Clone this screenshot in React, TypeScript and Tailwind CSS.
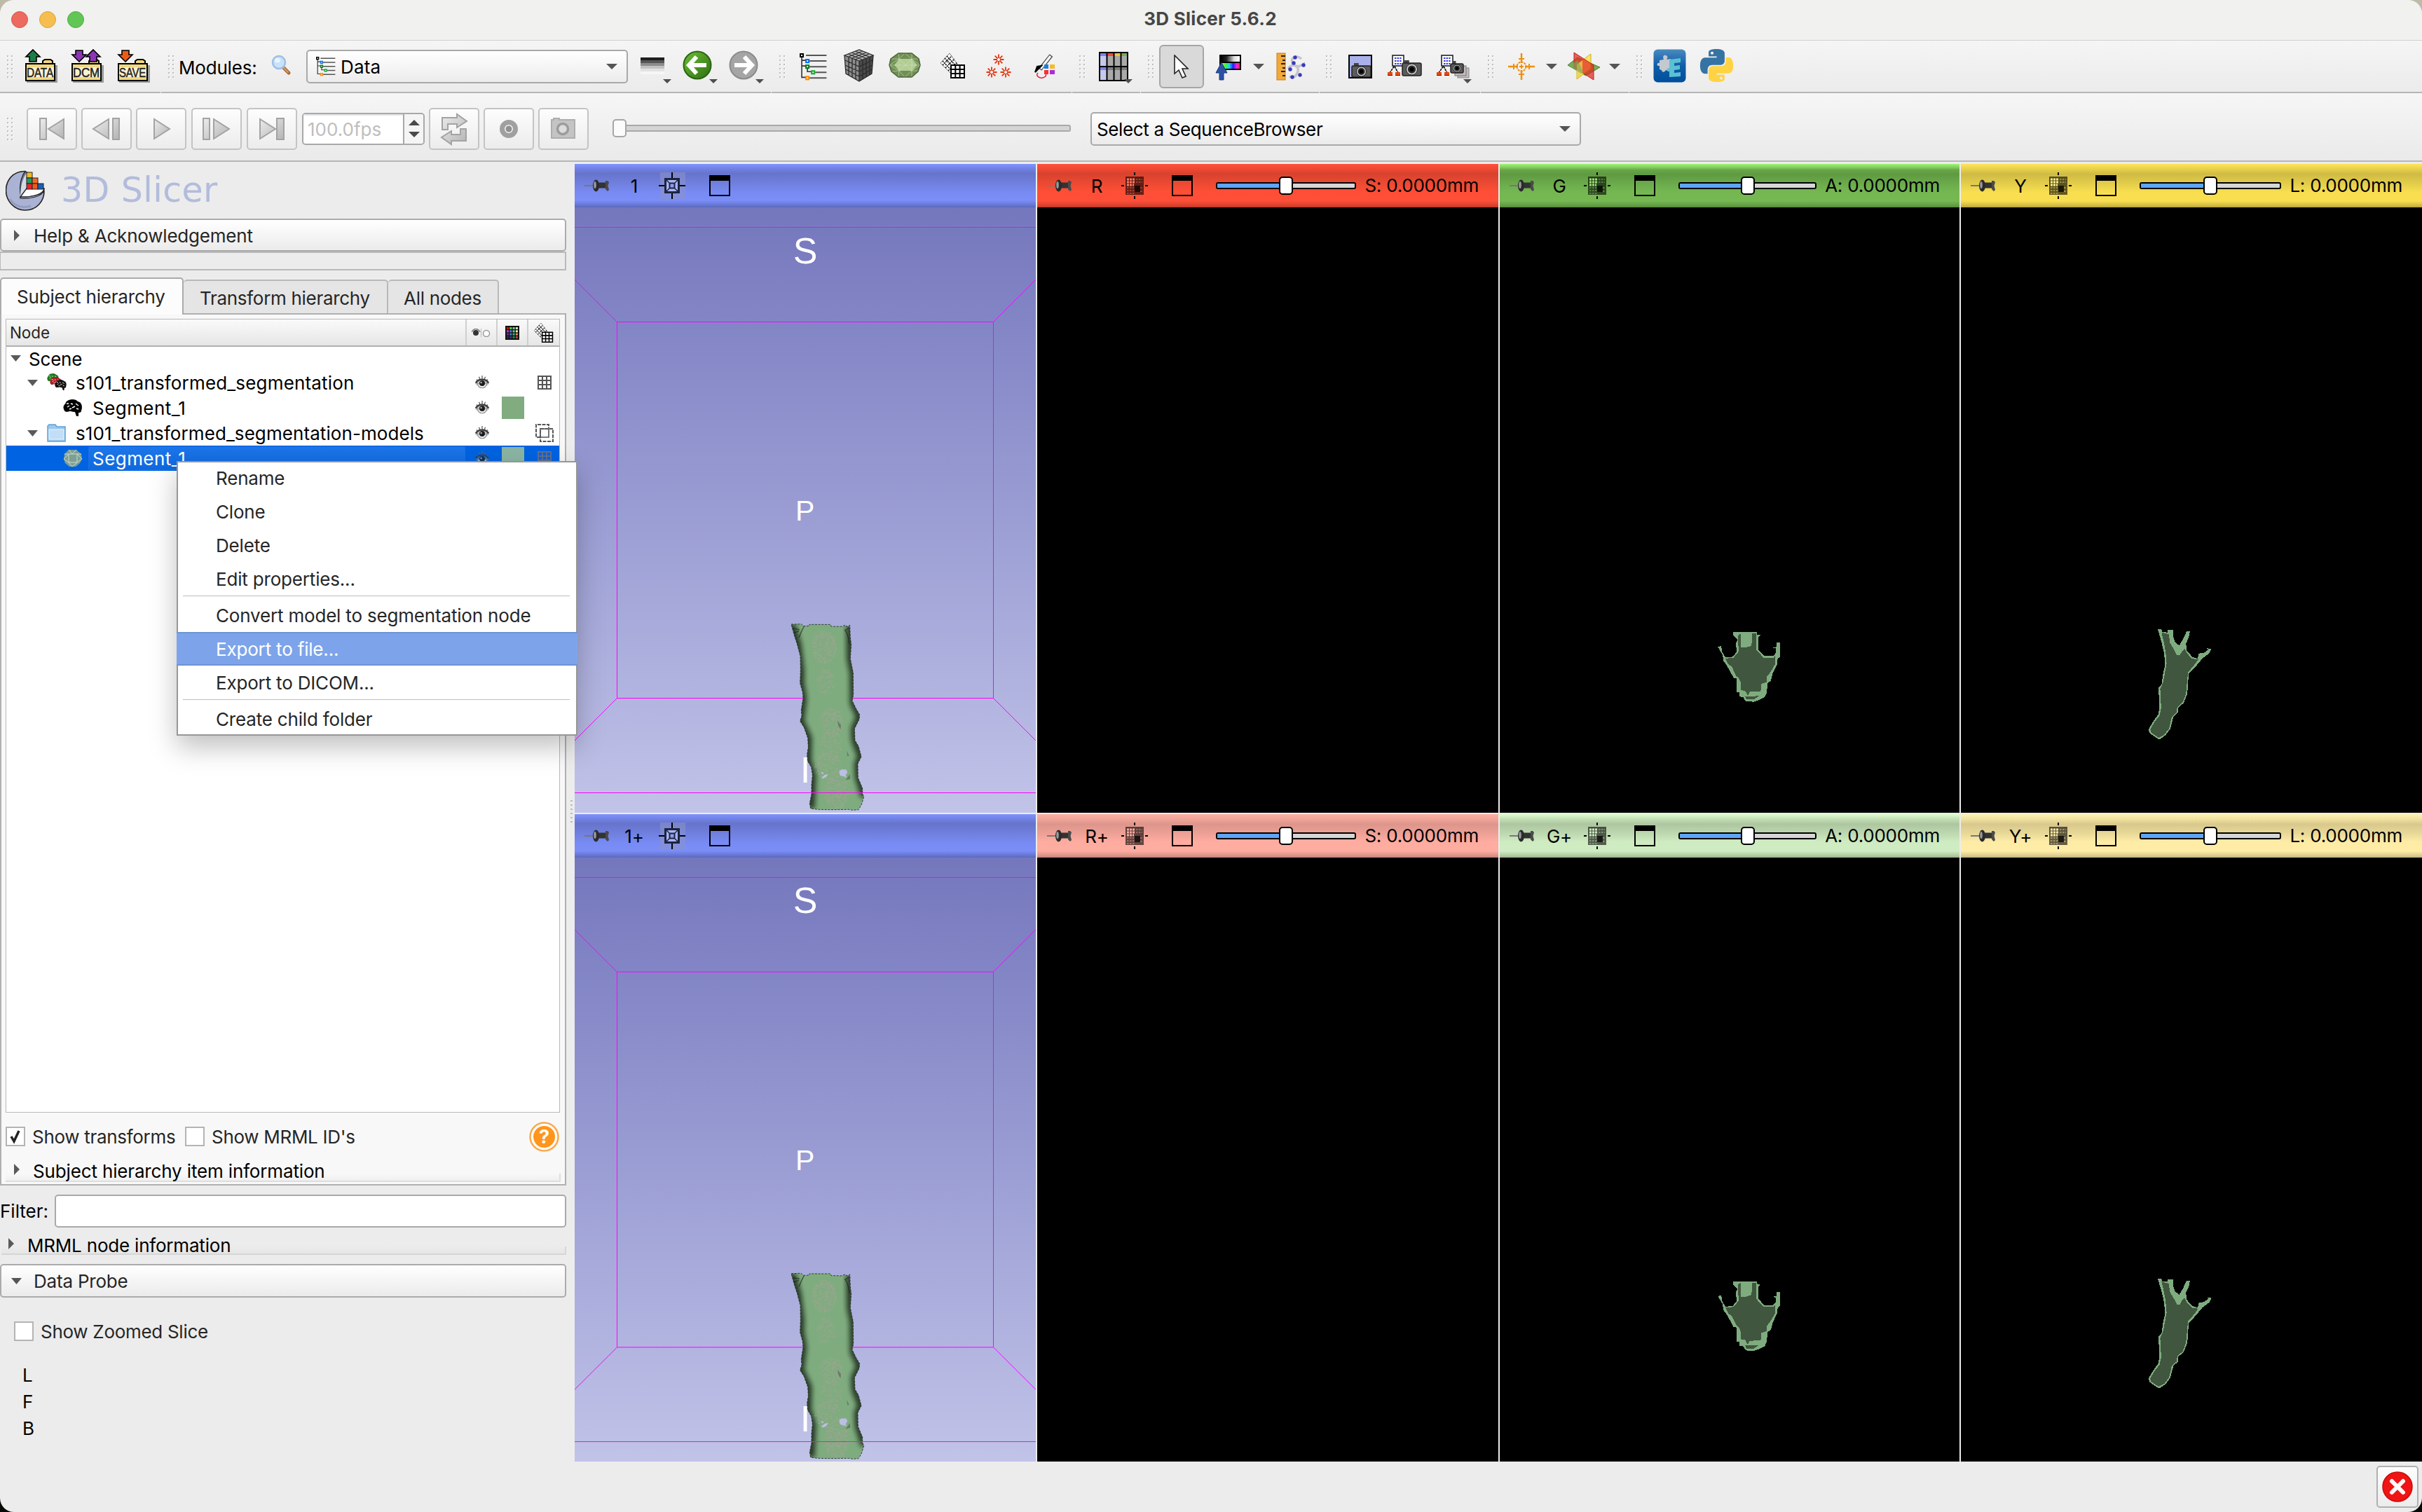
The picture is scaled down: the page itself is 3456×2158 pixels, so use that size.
import React from 'react';

/* ---------- small helpers ---------- */

type IcoProps = { x: number; w: number; y?: number; h?: number; className?: string; children: React.ReactNode };

function Ico({ x, w, y = 58, h = 73, className = '', children }: IcoProps) {
  return (
    <svg className={`shrink-0 overflow-visible ${className}`} width={w} height={h} viewBox={`${x} ${y} ${w} ${h}`}>
      {children}
    </svg>
  );
}

function Handle({ className = '' }: { className?: string }) {
  return (
    <svg className={`shrink-0 self-center ${className}`} width="9" height="34" viewBox="0 0 9 34">
      {[0, 6, 12, 18, 24, 30].map((y) => (
        <g key={y}>
          <rect x="0" y={y + 1} width="2" height="2" fill="#bdbdbd" />
          <rect x="6" y={y + 1} width="2" height="2" fill="#bdbdbd" />
          <rect x="2" y={y + 2} width="1" height="2" fill="#fff" />
          <rect x="8" y={y + 2} width="1" height="2" fill="#fff" />
        </g>
      ))}
    </svg>
  );
}

function SmallArrow({ x, y = 113 }: { x: number; y?: number }) {
  return <path d={`M${x - 6} ${y}h12l-6 6z`} fill="#4e4e4e" />;
}

function DropArrow({ className = '' }: { className?: string }) {
  return (
    <svg className={`shrink-0 self-center ${className}`} width="16" height="8" viewBox="0 0 16 8">
      <path d="M0 0h16l-8 8z" fill="#555" />
    </svg>
  );
}

function RightArrow({ className = '' }: { className?: string }) {
  return (
    <svg className={`shrink-0 ${className}`} width="8" height="16" viewBox="0 0 8 16">
      <path d="M0 0v16l8-8z" fill="#5a5a5a" />
    </svg>
  );
}

/* ---------- toolbar icons ---------- */

const upArrow = (c: number) => `M${c} 71l10 10h-5v7h-10v-7h-5z`;
const downArrow = (c: number) => `M${c} 88l-10-10h5v-6h10v6h5z`;

function Folder({ x, label, arrows }: { x: number; label: string; arrows: React.ReactNode }) {
  return (
    <>
      <path d={`M${x + 2} 93h44v25h-44z`} fill="#9a9a9a" />
      <path d={`M${x + 25} 91v-4l3-2h8l3 2v4`} fill="#efd77e" stroke="#000" strokeWidth="2" />
      <rect x={x + 1} y="91" width="41" height="24" fill="#fcf2d2" stroke="#000" strokeWidth="2" />
      <rect x={x + 2} y="92" width="39" height="4" fill="#f0d980" />
      <rect x={x + 2} y="110" width="39" height="4" fill="#f0d980" />
      <text x={x + 2} y="110" fontSize="18" fontFamily="Liberation Sans, sans-serif" stroke="#222" strokeWidth="0.5" fill="#222" textLength="38" lengthAdjust="spacingAndGlyphs">
        {label}
      </text>
      {arrows}
    </>
  );
}

function TreeGlyph({ x, y, s }: { x: number; y: number; s: number }) {
  return (
    <g transform={`translate(${x} ${y}) scale(${s})`} fill="none">
      <path d="M3 5v29h6M3 10h6M3 18h6M11 20v6h6" stroke="#333" strokeWidth="1.6" />
      <path d="M9 3h29M14 11h24M14 19h24M22 27h16M14 35h24" stroke="#555" strokeWidth="2" />
      <rect x="1" y="1" width="4" height="4" stroke="#000" strokeWidth="2" />
      <rect x="9" y="9" width="4" height="4" stroke="#0a6cf0" strokeWidth="2" />
      <rect x="9" y="17" width="4" height="4" stroke="#0a7a1e" strokeWidth="2" />
      <rect x="17" y="25" width="4" height="4" stroke="#0fae2c" strokeWidth="2" />
      <rect x="9" y="33" width="4" height="4" stroke="#ff8a00" strokeWidth="2" />
    </g>
  );
}

function TransformGlyph({ x, y, s }: { x: number; y: number; s: number }) {
  return (
    <g transform={`translate(${x} ${y}) scale(${s})`}>
      <path d="M13 0L25 17L14 28L0 14z" fill="#fff" stroke="#777" strokeWidth="1" />
      <path d="M3 11l13 14M6 7l13 14M9 4l13 14M3 17L16 4M7 21L20 8M11 25L24 13" stroke="#111" strokeWidth="1.6" strokeDasharray="2 1" fill="none" />
      <path d="M15 17h19v18h-19z" fill="#fff" stroke="#000" strokeWidth="2" />
      <path d="M21.3 17v18M27.6 17v18M15 23h19M15 29h19" stroke="#000" strokeWidth="2" />
    </g>
  );
}

function Camera({ x, y, w, h }: { x: number; y: number; w: number; h: number }) {
  return (
    <g>
      <rect x={x + 3} y={y - 4} width={w / 4} height="5" fill="#444" />
      <rect x={x} y={y} width={w} height={h} rx="2" fill="#5c5c5c" stroke="#222" strokeWidth="1.5" />
      <circle cx={x + w / 2} cy={y + h / 2} r={h / 2 - 1} fill="#c9c9c9" stroke="#222" />
      <circle cx={x + w / 2} cy={y + h / 2} r={h / 3.2} fill="#2a2a2a" />
      <circle cx={x + w / 2} cy={y + h / 2} r={h / 6} fill="#000" />
    </g>
  );
}

function SceneFigure({ x }: { x: number }) {
  return (
    <g>
      <rect x={x + 7} y="79" width="16" height="15" fill="#fff" stroke="#222" strokeWidth="1.6" />
      <path d={`M${x + 10} 83h10M${x + 10} 87h10M${x + 10} 91h10`} stroke="#3a3ae0" strokeWidth="1.8" strokeDasharray="2.4 1.2" />
      <path d={`M${x + 9} 95l-6 9M${x + 10} 95l5 9`} stroke="#000" strokeWidth="1.6" strokeDasharray="3 1" />
      <path d={`M${x} 105h7M${x + 11} 105h7`} stroke="#e84a10" strokeWidth="4" />
      <path d={`M${x} 107.5h7M${x + 11} 107.5h7`} stroke="#222" strokeWidth="1" />
    </g>
  );
}

function star(cx: number, cy: number) {
  let d = '';
  for (let i = 0; i < 4; i++) {
    const a = (i * Math.PI) / 4 + Math.PI / 2;
    const c = Math.cos(a), s = Math.sin(a);
    d += `M${cx + c * 2} ${cy + s * 2}L${cx + c * 7.5} ${cy + s * 7.5}M${cx - c * 2} ${cy - s * 2}L${cx - c * 7.5} ${cy - s * 7.5}`;
  }
  return d;
}

function Group({ w, last, children }: { w?: string; last?: boolean; children: React.ReactNode }) {
  return (
    <div className={`flex h-[75px] items-start border-b-2 border-[#b6b6b6] ${last ? 'flex-1' : 'mr-px'} ${w ?? ''}`}>
      <div className="flex h-[73px] items-center">{children}</div>
    </div>
  );
}

function MainToolbar() {
  return (
    <div className="flex h-[75px] shrink-0 bg-gradient-to-b from-[#f5f5f5] to-[#ebebeb]">
      <Group w="w-[229px]">
        <Handle className="ml-[10px]" />
        <Ico x={36} w={46} className="ml-[17px]">
          <Folder x={36} label="DATA" arrows={<path d={upArrow(47)} fill="#1d7c46" stroke="#000" strokeWidth="1.6" />} />
        </Ico>
        <Ico x={102} w={46} className="ml-[20px]">
          <Folder x={102} label="DCM" arrows={<><path d={downArrow(113)} fill="#8b37b4" stroke="#000" strokeWidth="1.6" /><path d={upArrow(133)} fill="#8b37b4" stroke="#000" strokeWidth="1.6" /></>} />
        </Ico>
        <Ico x={168} w={46} className="ml-[20px]">
          <Folder x={168} label="SAVE" arrows={<path d={downArrow(179)} fill="#ea5c17" stroke="#000" strokeWidth="1.6" />} />
        </Ico>
      </Group>

      <Group w="w-[870px]">
        <Handle className="ml-[10px]" />
        <span className="ml-[6px] mt-[3px] w-[132px] text-[26px]">Modules:</span>
        <Ico x={387} w={28}>
          <path d="M403 95l9 9" stroke="#a8683a" strokeWidth="5" strokeLinecap="round" />
          <path d="M404 96l7 7" stroke="#d7a06c" strokeWidth="2" strokeLinecap="round" />
          <circle cx="398" cy="89" r="9" fill="#c9e2fa" stroke="#9dbfe8" strokeWidth="2.5" />
          <ellipse cx="396" cy="86" rx="4" ry="3.5" fill="#e8f4ff" />
        </Ico>
        <div className="ml-[22px] flex h-[48px] w-[459px] items-center rounded-[5px] border-2 border-[#a9a9a9] bg-gradient-to-b from-white to-[#ececec]">
          <svg className="ml-[12px]" width="28" height="28" viewBox="0 0 28 28"><TreeGlyph x={0} y={0} s={0.72} /></svg>
          <span className="ml-[7px] mt-[2px] text-[26px] tracking-[0.2px]">Data</span>
          <DropArrow className="ml-auto mr-[13px]" />
        </div>
        <Ico x={914} w={46} className="ml-[18px]">
          <rect x="914" y="82" width="34" height="4" fill="#1e1e1e" />
          <rect x="914" y="86" width="34" height="4" fill="#555" />
          <rect x="914" y="90" width="34" height="4" fill="#8c8c8c" />
          <rect x="914" y="94" width="34" height="4" fill="#c2c2c2" />
          <rect x="914" y="98" width="34" height="4" fill="#e2e2e2" />
          <rect x="914" y="102" width="34" height="4" fill="#f6f6f6" />
          <SmallArrow x={952} />
        </Ico>
        <Ico x={975} w={50} className="ml-[15px]">
          <defs><linearGradient id="grn" x1="0" x2="1" y1="0" y2="1"><stop offset="0" stopColor="#6cbf35" /><stop offset="1" stopColor="#2f6f12" /></linearGradient></defs>
          <circle cx="995" cy="93" r="19.5" fill="url(#grn)" stroke="#2a6410" strokeWidth="2" />
          <path d="M1008 93h-22M994 81l-11 12l11 12" stroke="#fff" strokeWidth="6" fill="none" />
          <SmallArrow x={1018} />
        </Ico>
        <Ico x={1041} w={50} className="ml-[16px]">
          <circle cx="1061" cy="93" r="19.5" fill="#a5a5a5" stroke="#8a8a8a" strokeWidth="2" />
          <path d="M1048 93h22M1062 81l11 12l-11 12" stroke="#fff" strokeWidth="6" fill="none" />
          <SmallArrow x={1084} />
        </Ico>
      </Group>

      <Group w="w-[428px]">
        <Handle className="ml-[11px]" />
        <Ico x={1142} w={38} className="ml-[21px]"><TreeGlyph x={1141} y={76} s={1.01} /></Ico>
        <Ico x={1205} w={41} className="ml-[25px]">
          <path d="M1226 71l20 8-20 8-21-8z" fill="#b5b5b5" />
          <path d="M1205 79l21 8v29l-19-11z" fill="#8e8e8e" />
          <path d="M1246 79l-20 8v29l18-11z" fill="#4a4a4a" />
          <path d="M1205 79l21-8 20 8-20 8zM1210 77l20 8M1215 75l20 8M1220 73l20 8M1240 77l-20 8M1236 75l-20 8M1231 73l-20 8M1205 79l2 26 19 11 18-11 2-26M1226 87v29M1211 82v25M1216 84v27M1221 86v27M1231 86v27M1236 84v27M1241 82v25M1206 86l20 9 19-9M1206 93l20 9 19-9M1207 99l19 10 18-10" fill="none" stroke="#2b2b2b" strokeWidth="1.3" />
        </Ico>
        <Ico x={1269} w={44} className="ml-[23px]">
          <path d="M1282 76h19l10 8 2 9-3 9-9 8h-19l-10-8-3-9 2-9z" fill="#6f8f54" />
          <path d="M1283 84h18l8 9-8 8h-18l-7-8z" fill="#b2cc94" />
          <path d="M1272 84l11 0 8-8 10 8h10M1269 93l14-9M1283 84l9 9 9-9 12 9M1269 93l14 8 9-8 9 8 12-8M1272 102l11-1 8 9 10-9h9M1283 84v17M1301 84v17M1269 93h44M1282 76l1 8M1301 76v8M1282 110l1-9M1301 110v-9" fill="none" stroke="#d4e2be" strokeWidth="0.8" opacity="0.7" />
          <path d="M1282 76h19l10 8 2 9-3 9-9 8h-19l-10-8-3-9 2-9z" fill="none" stroke="#4c6638" strokeWidth="1.5" />
        </Ico>
        <Ico x={1342} w={35} className="ml-[29px]"><TransformGlyph x={1342} y={76} s={1} /></Ico>
        <Ico x={1407} w={36} className="ml-[30px]">
          <path d={star(1425, 85) + star(1415, 103) + star(1435, 103)} stroke="#e8330f" strokeWidth="1.8" fill="none" />
        </Ico>
        <Ico x={1476} w={31} className="ml-[33px]">
          <path d="M1500 79l-16 20" stroke="#555" strokeWidth="6" />
          <path d="M1499 80l-14 18" stroke="#fff" strokeWidth="3" />
          <path d="M1486 94l-9 9 3 -8z" fill="#000" stroke="#000" strokeWidth="2" />
          <path d="M1481 104c-4 4 2 8 7 7s6-5 3-9" fill="none" stroke="#e0204a" strokeWidth="1.5" />
          <rect x="1490" y="92" width="6" height="6" fill="#1c7fd8" />
          <rect x="1498" y="92" width="7" height="6" fill="#f6bb28" />
          <rect x="1490" y="100" width="6" height="6" fill="#fa3030" />
          <rect x="1498" y="100" width="7" height="6" fill="#b02ad8" />
        </Ico>
      </Group>

      <Group w="w-[97px]">
        <Handle className="ml-[10px]" />
        <Ico x={1568} w={48} className="ml-[19px]">
          <rect x="1569" y="75" width="40" height="40" fill="#a9a9a9" stroke="#000" strokeWidth="2" />
          <rect x="1570" y="76" width="9" height="38" fill="#c6c8ec" />
          <rect x="1570" y="76" width="9" height="4" fill="#7385ee" />
          <rect x="1580" y="76" width="9" height="4" fill="#f04a36" />
          <rect x="1590" y="76" width="9" height="4" fill="#e8c544" />
          <rect x="1600" y="76" width="8" height="4" fill="#70b050" />
          <rect x="1570" y="96" width="9" height="4" fill="#7385ee" />
          <rect x="1580" y="96" width="28" height="4" fill="#7e7e7e" />
          <path d="M1579.5 75v40M1589.5 75v40M1599.5 75v40M1569 95h40" stroke="#000" strokeWidth="2" />
          <SmallArrow x={1610} />
        </Ico>
      </Group>

      <Group w="w-[254px]">
        <Handle className="ml-[10px]" />
        <div className="ml-[7px] flex h-[62px] w-[64px] items-center justify-center rounded-[6px] border-2 border-[#a6a6a6] bg-[#d9d9d9]">
          <svg width="22" height="34" viewBox="0 0 22 34">
            <path d="M1 1v26l6-5 5 11 5-2-5-11h8z" fill="#fff" stroke="#222" strokeWidth="1.6" />
          </svg>
        </div>
        <Ico x={1735} w={36} className="ml-[17px]">
          <defs>
            <linearGradient id="wl"><stop offset="0" stopColor="#000" /><stop offset="0.3" stopColor="#222" /><stop offset="0.7" stopColor="#ddd" /><stop offset="1" stopColor="#fff" /></linearGradient>
            <linearGradient id="hue"><stop offset="0" stopColor="#ff3" /><stop offset="0.25" stopColor="#3f3" /><stop offset="0.45" stopColor="#2cf" /><stop offset="0.65" stopColor="#22f" /><stop offset="0.85" stopColor="#f2d" /><stop offset="1" stopColor="#f24" /></linearGradient>
          </defs>
          <rect x="1741" y="79" width="29" height="20" fill="#000" stroke="#000" strokeWidth="2" />
          <rect x="1742" y="80" width="27" height="8" fill="url(#wl)" />
          <rect x="1742" y="90" width="27" height="8" fill="url(#hue)" />
          <path d="M1743 89l8 15h-5v10h-6v-10h-5z" fill="#2d52a4" stroke="#1c3a80" strokeWidth="1" />
        </Ico>
        <DropArrow className="ml-[17px]" />
        <Ico x={1821} w={44} className="ml-[17px]">
          <rect x="1822" y="76" width="12" height="38" fill="#f2a93a" stroke="#c47e18" strokeWidth="1" />
          <path d="M1834 80h-6M1834 86h-4M1834 91h-6M1834 97h-4M1834 102h-6M1834 108h-4" stroke="#222" strokeWidth="2" />
          <path d="M1857 84c-9-8-18 1-11 8s14-2 16-2M1838 98c8-10 16-2 14 4s-6 11-12 7" fill="none" stroke="#c4c4cc" strokeWidth="3.5" />
          {[[1848, 82], [1846, 90], [1860, 93], [1841, 99], [1855, 107], [1844, 110]].map(([a, b]) => (
            <circle key={a} cx={a} cy={b} r="2.7" fill="#3838bc" />
          ))}
        </Ico>
      </Group>

      <Group w="w-[229px]">
        <Handle className="ml-[9px]" />
        <Ico x={1924} w={34} className="ml-[23px]">
          <rect x="1925" y="79" width="32" height="32" fill="#aab1ea" stroke="#000" strokeWidth="2" />
          <Camera x={1929} y={94} w={27} h={16} />
        </Ico>
        <Ico x={1980} w={49} className="ml-[22px]">
          <SceneFigure x={1980} />
          <Camera x={2001} y={90} w={27} h={18} />
        </Ico>
        <Ico x={2050} w={52} className="ml-[21px]">
          <SceneFigure x={2050} />
          <rect x="2080" y="97" width="16" height="14" fill="#c4bcbc" stroke="#888" />
          <rect x="2076" y="94" width="16" height="14" fill="#c4bcbc" stroke="#777" />
          <Camera x={2070} y={91} w={18} h={13} />
          <SmallArrow x={2094} />
        </Ico>
      </Group>

      <Group w="w-[211px]">
        <Handle className="ml-[10px]" />
        <Ico x={2152} w={38} className="ml-[20px]">
          <path d="M2171 76v14M2171 100v14M2152 95h14M2176 95h14" stroke="#f09010" strokeWidth="2.5" />
          <circle cx="2171" cy="95" r="6.5" fill="none" stroke="#f09010" strokeWidth="2" strokeDasharray="3 1.2" />
          <path d="M2167 84h8M2167 106h8M2160 91v8M2182 91v8M2168 95h6M2171 92v6" stroke="#f09010" strokeWidth="2" />
        </Ico>
        <DropArrow className="ml-[16px]" />
        <Ico x={2237} w={46} className="ml-[15px]">
          <path d="M2237 93l14-11 32 14-20 12z" fill="#78ae58" stroke="#4c8030" strokeWidth="1" />
          <path d="M2270 77l-20 15v21l20-15z" fill="#f8e468" stroke="#cfae20" strokeWidth="1" />
          <path d="M2246 75v21l28 18v-21z" fill="#e02a20" stroke="#c02020" strokeWidth="1" fillOpacity="0.72" />
          <path d="M2250 92l8-6v20l-8 6z" fill="#f3cf4c" fillOpacity="0.75" />
          <path d="M2239 94l12-8 9 18-4 1z" fill="#78ae58" fillOpacity="0.6" />
        </Ico>
        <DropArrow className="ml-[13px]" />
      </Group>

      <Group last>
        <Handle className="ml-[10px]" />
        <Ico x={2358} w={47} className="ml-[15px]">
          <defs><linearGradient id="ext" x1="0" x2="0" y1="0" y2="1"><stop offset="0" stopColor="#4a8ac0" /><stop offset="0.5" stopColor="#0f5ca8" /><stop offset="1" stopColor="#004e9c" /></linearGradient></defs>
          <rect x="2358.5" y="70.5" width="46" height="47" rx="6" fill="url(#ext)" />
          <path d="M2367 86l6-1c-2-4 0-7 3-6s3 4 1 6l6-1v18l-7-2c-2 4-6 3-6 0l-3-1v-5c-5 1-4-6 0-4z" fill="#c3c9cf" />
          <path d="M2381 85l16-2v6l-9 1v4l8-1v6l-8 1v4l9-1v6l-16 1v-8c-4 1-5-5 0-5z" fill="#5cc0d4" />
        </Ico>
        <Ico x={2425} w={47} className="ml-[20px]">
          <g transform="translate(2425 70) scale(1.96)">
            <path fill="#3673a5" d="M14.25.18l.9.2.73.26.59.3.45.32.34.34.25.34.16.33.1.3.04.26.02.2-.01.13V8.5l-.05.63-.13.55-.21.46-.26.38-.3.31-.33.25-.35.19-.35.14-.33.1-.3.07-.26.04-.21.02H8.77l-.69.05-.59.14-.5.22-.41.27-.33.32-.27.35-.2.36-.15.37-.1.35-.07.32-.04.27-.02.21v3.06H3.17l-.21-.03-.28-.07-.32-.12-.35-.18-.36-.26-.36-.36-.35-.46-.32-.59-.28-.73-.21-.88-.14-1.05-.05-1.23.06-1.22.16-1.04.24-.87.32-.71.36-.57.4-.44.42-.33.42-.24.4-.16.36-.1.32-.05.24-.01h.16l.06.01h8.16v-.83H6.18l-.01-2.75-.02-.37.05-.34.11-.31.17-.28.25-.26.31-.23.38-.2.44-.18.51-.15.58-.12.64-.1.71-.06.77-.04.84-.02 1.27.05zm-6.3 1.98l-.23.33-.08.41.08.41.23.34.33.22.41.09.41-.09.33-.22.23-.34.08-.41-.08-.41-.23-.33-.33-.22-.41-.09-.41.09z" />
            <path fill="#ffd343" d="M21.04 6.11l.28.06.32.12.35.18.36.27.36.35.35.47.32.59.28.73.21.88.14 1.04.05 1.23-.06 1.23-.16 1.04-.24.86-.32.71-.36.57-.4.45-.42.33-.42.24-.4.16-.36.09-.32.05-.24.02-.16-.01h-8.22v.82h5.84l.01 2.76.02.36-.05.34-.11.31-.17.29-.25.25-.31.24-.38.2-.44.17-.51.15-.58.13-.64.09-.71.07-.77.04-.84.01-1.27-.04-1.07-.14-.9-.2-.73-.25-.59-.3-.45-.33-.34-.34-.25-.34-.16-.33-.1-.3-.04-.25-.02-.2.01-.13v-5.34l.05-.64.13-.54.21-.46.26-.38.3-.32.33-.24.35-.2.35-.14.33-.1.3-.06.26-.04.21-.02.13-.01h5.84l.69-.05.59-.14.5-.21.41-.28.33-.32.27-.35.2-.36.15-.36.1-.35.07-.32.04-.28.02-.21V6.07h2.09l.14.01zm-6.47 14.25l-.23.33-.08.41.08.41.23.33.33.23.41.08.41-.08.33-.23.23-.33.08-.41-.08-.41-.23-.33-.33-.23-.41-.08-.41.08z" />
          </g>
        </Ico>
      </Group>
    </div>
  );
}

/* ---------- sequence toolbar ---------- */

function SeqButton({ x, className = '', children }: { x: number; className?: string; children: React.ReactNode }) {
  return (
    <div className={`h-[60px] w-[72px] shrink-0 rounded-[5px] border-2 border-[#c4c4c4] bg-gradient-to-b from-[#fdfdfd] to-[#ececec] ${className}`}>
      <svg width="68" height="56" viewBox={`${x + 2} 156 68 56`}>
        <g fill="url(#dis)" stroke="#a3a3a3" strokeWidth="2">{children}</g>
      </svg>
    </div>
  );
}

function SequenceToolbar() {
  return (
    <div className="flex h-[98px] shrink-0 items-center border-b-2 border-[#b6b6b6] bg-gradient-to-b from-[#f6f6f6] to-[#eaeaea] pt-[5px]">
      <svg width="0" height="0" className="absolute"><defs><linearGradient id="dis" x1="0" x2="1" y1="0" y2="1"><stop offset="0" stopColor="#ececec" /><stop offset="1" stopColor="#b4b4b4" /></linearGradient></defs></svg>
      <Handle className="ml-[10px]" />
      <SeqButton x={38} className="ml-[19px]"><path d="M57 169h9v30h-9zM91 170v28l-22-14z" /></SeqButton>
      <SeqButton x={116} className="ml-[6px]"><path d="M155 170v28l-22-14zM161 169h9v30h-9z" /></SeqButton>
      <SeqButton x={194} className="ml-[6px]"><path d="M220 170v28l22-14z" /></SeqButton>
      <SeqButton x={273} className="ml-[7px]"><path d="M290 169h9v30h-9zM305 170v28l22-14z" /></SeqButton>
      <SeqButton x={352} className="ml-[7px]"><path d="M371 170v28l22-14zM395 169h10v30h-10z" /></SeqButton>
      <div className="ml-[7px] flex h-[46px] w-[175px] shrink-0 rounded-[5px] border-2 border-[#a9a9a9] bg-white">
        <div className="flex w-[142px] items-center pl-[6px] pt-[2px] text-[26px] tracking-[0px] text-[#bebebe] shadow-[inset_0_2px_1px_#e4e4e4]">100.0fps</div>
        <div className="flex flex-1 flex-col items-center justify-center gap-[9px] rounded-r-[4px] border-l-2 border-[#a9a9a9] bg-[#f5f5f5]">
          <svg width="16" height="8" viewBox="0 0 16 8"><path d="M0 8h16l-8-8z" fill="#4a4a4a" /></svg>
          <svg width="16" height="8" viewBox="0 0 16 8"><path d="M0 0h16l-8 8z" fill="#4a4a4a" /></svg>
        </div>
      </div>
      <SeqButton x={612} className="ml-[6px]">
        <path d="M631 185v-17h21v-5l14 10-14 9v-5h-13v8zM665 184v17h-21v5l-14-10 14-9v5h13v-8z" />
      </SeqButton>
      <SeqButton x={690} className="ml-[6px]">
        <circle cx="726" cy="184" r="9.5" fill="none" stroke="#a0a0a0" strokeWidth="7" />
        <circle cx="726" cy="184" r="4.5" fill="#909090" stroke="none" />
      </SeqButton>
      <SeqButton x={768} className="ml-[6px]">
        <path d="M787 171h3v-2h8v2h22v26h-33z" fill="#c4c4c4" stroke="#adadad" />
        <circle cx="803" cy="184" r="7.5" fill="#dcdcdc" stroke="#9c9c9c" strokeWidth="3.5" />
      </SeqButton>
      <div className="mb-[1px] ml-[34px] flex w-[654px] shrink-0 items-center">
        <div className="h-[26px] w-[20px] shrink-0 rounded-[5px] border-2 border-[#a6a6a6] bg-[#fbfbfb]" />
        <div className="h-[10px] flex-1 rounded-r-[3px] border-2 border-l-0 border-[#a9a9a9] bg-[#d4d4d4]" />
      </div>
      <div className="ml-[28px] mt-[1px] flex h-[48px] w-[700px] shrink-0 items-center rounded-[5px] border-2 border-[#a9a9a9] bg-gradient-to-b from-white to-[#ebebeb]">
        <span className="ml-[7px] mt-[1px] text-[26px] tracking-[-0.36px]">Select a SequenceBrowser</span>
        <DropArrow className="ml-auto mr-[13px]" />
      </div>
    </div>
  );
}

/* ---------- left panel ---------- */

function SlicerLogo() {
  return (
    <svg className="ml-[8px] shrink-0" width="57" height="58" viewBox="8 242 57 58">
      <path d="M36 243.5C18 243 8.5 257 8.5 271s11 28 27.5 28 27-13 27-27l-14 -2-12-22z" fill="#aab3d4" stroke="#222" strokeWidth="1.6" />
      <path d="M36 243.5l3 1.5v20l-9 15c-3-12-1-28 6-36.500z" fill="#6f7796" stroke="#222" strokeWidth="1.2" />
      <path d="M38 246v22l-9 12c0-14 3-26 9-34z" fill="#d4dbe8" />
      <path d="M29 280l9-12h25c0 6-12 13-34 12z" fill="#fff" stroke="#222" strokeWidth="1.3" />
      <path d="M29 280c20 1 34-5 34-12 1 9-14 15-34 14z" fill="#c3cbe6" stroke="#222" strokeWidth="1.2" />
      <g stroke="#222" strokeWidth="1">
        <rect x="38" y="245" width="8" height="8" fill="#f7b81c" />
        <rect x="38" y="253" width="8" height="8" fill="#1f9a5f" />
        <rect x="46" y="253" width="8" height="8" fill="#f26a21" />
        <rect x="38" y="261" width="8" height="8" fill="#e8242a" />
        <rect x="46" y="261" width="8" height="8" fill="#f0581f" />
        <rect x="54" y="261" width="8" height="8" fill="#1a5fb4" />
      </g>
      <path d="M14 283c6 10 18 14 30 10" stroke="#8790b4" strokeWidth="3" fill="none" opacity="0.6" />
    </svg>
  );
}

function Eye() {
  return (
    <svg className="shrink-0" width="24" height="20" viewBox="0 0 24 22">
      <path d="M2 12l3-1M3 6l4 3M7 2l2 5M12 0v6M17 2l-2 5M21 6l-4 3M22 12l-3-1" stroke="#666" strokeWidth="1.5" />
      <path d="M1 12c4-8 18-8 22 0-4 8-18 8-22 0z" fill="#8a8a8a" opacity="0.5" />
      <path d="M5 13a7 6.500 0 0 0 14 0z" fill="#f0f0f0" stroke="#8a8a8a" strokeWidth="1.2" />
      <path d="M2 11.500c4-7 16-7 20 0" stroke="#3a3a3a" strokeWidth="2.6" fill="none" />
      <circle cx="12" cy="12" r="4.400" fill="#1c1c1c" />
      <circle cx="10.5" cy="11" r="1.5" fill="#aaa" />
    </svg>
  );
}

function GridIcon({ color }: { color: string }) {
  return (
    <svg width="20" height="20" viewBox="0 0 20 20">
      <path d="M1 1h18v18h-18zM7 1v18M13 1v18M1 7h18M1 13h18" fill="none" stroke={color} strokeWidth="2" />
    </svg>
  );
}

function StackIcon() {
  return (
    <svg width="26" height="26" viewBox="0 0 26 26">
      <path d="M7 19h-6v-18h18v5" fill="none" stroke="#555" strokeWidth="2" strokeDasharray="5 1.5" />
      <path d="M7 7h18v18h-18z" fill="none" stroke="#555" strokeWidth="2" strokeDasharray="5 1.5" />
      <path d="M7 7h12v12h-12z" fill="none" stroke="#555" strokeWidth="1.6" />
    </svg>
  );
}

function Brain({ x, y, s, c }: { x: number; y: number; s: number; c: string }) {
  return (
    <g transform={`translate(${x} ${y}) scale(${s})`}>
      <path d="M1 14C-1 8 4 7 4 4c4-5 14-5 17-1 6 1 7 8 5 13 0 3-3 3-4 3v5h-3l-2-6c-5 0-6-2-8-1s-7 2-8-3z" fill={c} />
      <path d="M6 11l3-2M11 6l3 1M13 12l4-2M18 6l4 3M9 14l3-1M19 13l3 1M5 6l3 0" stroke="#fff" strokeWidth="1.4" />
    </g>
  );
}

function TreeArrow({ className }: { className: string }) {
  return (
    <svg className={`shrink-0 ${className}`} width="15" height="9" viewBox="0 0 15 9">
      <path d="M0 0h15l-7.5 9z" fill="#5a5a5a" />
    </svg>
  );
}

type RowProps = { h: string; arrow?: string; icon?: React.ReactNode; textClass: string; label: string; eye?: boolean; swatch?: string; last?: React.ReactNode; selected?: boolean };

function TreeRow({ h, arrow, icon, textClass, label, eye, swatch, last, selected }: RowProps) {
  return (
    <div className={`flex items-center ${h} ${selected ? 'bg-[#0063e1] text-white' : 'text-black'}`}>
      <div className="relative flex h-full w-[655px] items-center">
        {selected && <div className="absolute inset-y-[1px] left-[117px] right-0 rounded-[2px] border border-[#1b70e6] bg-gradient-to-b from-[#1c76ea] to-[#0f69de]" />}
        {arrow && <TreeArrow className={arrow} />}
        {icon}
        <span className={`relative mt-[1px] whitespace-nowrap text-[26px] ${textClass}`}>{label}</span>
      </div>
      <div className={`flex w-[44px] items-center justify-center pl-[3px] ${selected ? 'opacity-70' : ''}`}>{eye && <Eye />}</div>
      <div className="flex w-[44px] justify-center pl-[3px]">{swatch && <div className={`h-[32px] w-[32px] ${swatch}`} />}</div>
      <div className="flex flex-1 items-center justify-center pl-[3px]">{last}</div>
    </div>
  );
}

function Tree() {
  const palette = ['#e00', '#4d4', '#7c6', '#ddd', '#a4c', '#57d', '#6bb', '#ee9', '#828', '#38a', '#4a8', '#e86', '#424', '#33a', '#094', '#d33'];
  return (
    <div className="relative ml-[6px] mr-[7px] mt-[6px] flex h-[1136px] flex-col border border-[#b9b9b9] bg-white">
      <div className="flex h-[39px] shrink-0 items-center border-b-2 border-[#b0b0b0] bg-gradient-to-b from-[#fafafa] to-[#e6e6e6]">
        <span className="w-[655px] pl-[5px] pt-[1px] text-[22.5px] tracking-[-0.1px] text-[#262626]">Node</span>
        <div className="flex h-full w-[44px] items-center justify-center border-l-2 border-[#cfcfcf]">
          <svg width="28" height="12" viewBox="0 0 28 12">
            <circle cx="6" cy="6" r="4" fill="#333" /><path d="M0 5c3-6 9-6 12 0" stroke="#777" strokeWidth="1.5" fill="none" />
            <path d="M13.5 0v12" stroke="#bbb" /><circle cx="21" cy="7" r="4.5" fill="#fff" stroke="#999" strokeWidth="1.5" />
          </svg>
        </div>
        <div className="flex h-full w-[44px] items-center justify-center border-l-2 border-[#cfcfcf]">
          <svg width="20" height="20" viewBox="0 0 20 20">
            <rect width="20" height="20" fill="#111" />
            {palette.map((c, i) => <rect key={i} x={2 + (i % 4) * 4.3} y={2 + Math.floor(i / 4) * 4.3} width="3" height="3" fill={c} />)}
          </svg>
        </div>
        <div className="flex h-full flex-1 items-center justify-center border-l-2 border-[#cfcfcf]">
          <svg width="28" height="28" viewBox="0 0 36 36"><TransformGlyph x={0} y={0} s={1} /></svg>
        </div>
      </div>
      <TreeRow h="h-[33px]" arrow="ml-[6px]" label="Scene" textClass="ml-[11px]" />
      <TreeRow h="h-[36px]" arrow="ml-[30px]" label="s101_transformed_segmentation" textClass="ml-[12px] tracking-[0.17px]" eye last={<GridIcon color="#555" />}
        icon={<svg className="ml-[12px]" width="30" height="26" viewBox="0 0 30 26"><Brain x={1} y={0} s={0.62} c="#1d7a1d" /><Brain x={5} y={5} s={0.62} c="#b01c24" /><Brain x={12} y={9} s={0.62} c="#111" /></svg>} />
      <TreeRow h="h-[36px]" label="Segment_1" textClass="ml-[14px] tracking-[0.45px]" eye swatch="bg-[#80ac80]"
        icon={<svg className="ml-[81px]" width="28" height="26" viewBox="0 0 28 26"><Brain x={0} y={1} s={1} c="#000" /></svg>} />
      <TreeRow h="h-[36px]" arrow="ml-[30px]" label="s101_transformed_segmentation-models" textClass="ml-[12px] tracking-[0.08px]" eye last={<StackIcon />}
        icon={
          <svg className="ml-[12px]" width="30" height="26" viewBox="0 0 30 26">
            <path d="M2 25v-22l2-2h9l2 3h12v21z" fill="#9cc8ee" stroke="#5fa2d8" strokeWidth="1.5" />
            <rect x="4" y="8" width="21" height="14" fill="#c2def6" stroke="#eaf5ff" strokeWidth="1" />
          </svg>
        } />
      <TreeRow h="h-[36px]" label="Segment_1" textClass="ml-[14px] tracking-[0.45px]" eye selected swatch="bg-[#8bb5a3]" last={<GridIcon color="#5d6f93" />}
        icon={
          <svg className="ml-[81px]" width="28" height="26" viewBox="0 0 28 26">
            <path d="M8 1h11l7 6 1 7-3 6-6 5h-9l-6-5-2-6 1-7z" fill="#7f9f94" />
            <path d="M8 1l5 6 6-6M2 7h6l5 0h7l6 0M1 14l7-7M27 14l-7-7M8 7v12M20 7v12M1 14l7 5h12l7-5M8 19l5 6 7-6" stroke="#c8dcd2" strokeWidth="1" fill="none" />
          </svg>
        } />
    </div>
  );
}

function CheckBox({ checked }: { checked?: boolean }) {
  return (
    <div className="h-[28px] w-[28px] shrink-0 border-2 border-[#b4b4b4] bg-white">
      {checked && (
        <svg width="24" height="24" viewBox="0 0 24 24"><path d="M6 12l4 7 7-15" fill="none" stroke="#222" strokeWidth="3.5" /></svg>
      )}
    </div>
  );
}

function LeftPanel() {
  return (
    <div className="flex h-[1855px] w-[820px] shrink-0 bg-[#ececec]">
      <div className="flex w-[808px] flex-col">
        <div className="flex h-[81px] items-center pt-[1px]">
          <SlicerLogo />
          <span className="ml-[22px] font-['DejaVu_Sans'] text-[49px] tracking-[0.4px] text-[#b2bcdc]">3D Slicer</span>
        </div>
        <div className="flex h-[47px] shrink-0 items-center rounded-[5px] border-2 border-[#ababab] bg-gradient-to-b from-white to-[#ebebeb] pl-[18px] text-[#262626]">
          <RightArrow />
          <span className="ml-[20px] mt-[2px] text-[26px]">Help &amp; Acknowledgement</span>
        </div>
        <div className="h-[27px] shrink-0 border-2 border-l-[1px] border-[#b9b9b9]" />
        <div className="mt-[8px] flex h-[53px] shrink-0 items-end text-[26px] text-[#262626]">
          <div className="relative z-10 -mb-[2px] flex h-[53px] w-[262px] items-center rounded-t-[5px] border-2 border-b-0 border-[#ababab] bg-[#fcfcfc] pl-[22px]">Subject hierarchy</div>
          <div className="flex h-[48px] w-[292px] items-center rounded-t-[5px] border-2 border-b-0 border-l-0 border-[#b9b9b9] bg-[#e5e5e5] pl-[23px] pt-[2px] tracking-[-0.3px]">Transform hierarchy</div>
          <div className="flex h-[48px] w-[158px] items-center rounded-t-[5px] border-2 border-b-0 border-l-0 border-[#b9b9b9] bg-[#e5e5e5] pl-[22px] pt-[2px] tracking-[-0.3px]">All nodes</div>
        </div>
        <div className="flex h-[1245px] shrink-0 flex-col border-2 border-[#b0b0b0] bg-[#f8f8f8]">
          <Tree />
          <div className="mt-[12px] flex h-[44px] items-center pl-[6px] text-[26px] text-[#262626]">
            <CheckBox checked />
            <span className="ml-[10px] w-[218px] tracking-[-0.3px]">Show transforms</span>
            <CheckBox />
            <span className="ml-[10px] tracking-[-0.3px]">Show MRML ID's</span>
            <svg className="ml-auto mr-[8px]" width="43" height="43" viewBox="0 0 43 43">
              <circle cx="21.5" cy="21.5" r="20" fill="#fff" stroke="#f9a94c" strokeWidth="2.5" />
              <circle cx="21.5" cy="21.5" r="15.5" fill="#ff951c" />
              <text x="21.5" y="31" textAnchor="middle" fontSize="27" fontWeight="bold" fontFamily="Inter, sans-serif" fill="#fff">?</text>
            </svg>
          </div>
          <div className="relative mx-[6px] mt-[12px] flex h-[34px] items-center text-[26px]">
            <div className="absolute inset-x-0 bottom-[3px] h-[12px] border-b-2 border-r-2 border-[#dedede] bg-gradient-to-b from-[#f8f8f8] to-[#f0f0f0]" />
            <RightArrow className="relative mb-[9px] ml-[12px]" />
            <span className="relative mb-[3px] ml-[19px] tracking-[-0.15px] text-black">Subject hierarchy item information</span>
          </div>
        </div>
        <div className="mt-[12px] flex h-[48px] shrink-0 items-center">
          <span className="w-[78px] text-[26px] tracking-[0px] text-black">Filter:</span>
          <div className="h-[47px] flex-1 rounded-[5px] border-2 border-[#a9a9a9] bg-white" />
        </div>
        <div className="relative ml-[2px] mt-[9px] flex h-[32px] shrink-0 items-center text-[26px]">
          <div className="absolute inset-x-0 bottom-[2px] h-[12px] border-b-2 border-r-2 border-[#d6d6d6] bg-gradient-to-b from-[#ececec] to-[#e6e6e6]" />
          <RightArrow className="relative mb-[4px] ml-[10px]" />
          <span className="relative ml-[19px] text-black">MRML node information</span>
        </div>
        <div className="mt-[11px] flex h-[48px] shrink-0 items-center rounded-[5px] border-2 border-[#ababab] bg-gradient-to-b from-white to-[#ebebeb] pl-[14px] text-[#262626]">
          <svg width="15" height="9" viewBox="0 0 15 9"><path d="M0 0h15l-7.5 9z" fill="#555" /></svg>
          <span className="ml-[17px] text-[26px]">Data Probe</span>
        </div>
        <div className="mt-[34px] flex h-[28px] shrink-0 items-center pl-[20px] text-[26px] text-[#262626]">
          <CheckBox />
          <span className="ml-[10px] tracking-[-0.29px]">Show Zoomed Slice</span>
        </div>
        <div className="mt-[30px] flex flex-col pl-[32px] text-[26px] leading-[38px] text-black">
          <span>L</span>
          <span>F</span>
          <span>B</span>
        </div>
      </div>
      <div className="flex flex-1 flex-col items-center justify-center gap-[4px] pb-[1px] pl-[2px]">
        {[0, 1, 2, 3, 4, 5].map((i) => <div key={i} className="h-[2px] w-[3px] bg-[#bdbdbd]" />)}
      </div>
    </div>
  );
}

/* ---------- views ---------- */

function Pin() {
  return (
    <svg className="ml-[14px] shrink-0" width="36" height="20" viewBox="0 0 36 20">
      <path d="M0 10h13" stroke="#777" strokeWidth="2" />
      <path d="M20 5.5h10v8h-10z" fill="#333" />
      <path d="M30 3h3l2 2-1.500 5 1.500 6-2 2-3-3z" fill="#4a4a4a" />
      <ellipse cx="16.5" cy="10" rx="4.5" ry="8.5" fill="#2b2b2b" />
      <ellipse cx="15" cy="9" rx="1.8" ry="5" fill="#999" />
    </svg>
  );
}

function Maximize() {
  return (
    <svg className="shrink-0" width="30" height="30" viewBox="0 0 30 30">
      <path d="M1 1h28v28h-28z" fill="none" stroke="#000" strokeWidth="2" />
      <path d="M0 0h30v8h-30z" fill="#000" />
    </svg>
  );
}

function CenterIcon() {
  return (
    <svg className="shrink-0" width="38" height="38" viewBox="0 0 38 38">
      <rect x="2" y="0" width="36" height="38" fill="#8a93c8" opacity="0.55" />
      <path d="M19 0v9M19 29v9M0 19h9M29 19h9" stroke="#000" strokeWidth="2" />
      <rect x="9.5" y="9.5" width="19" height="19" fill="#aab4f4" stroke="#1c2440" strokeWidth="3" />
      <rect x="15.5" y="15.5" width="7" height="7" fill="#8f9cf0" stroke="#1c2440" strokeWidth="2" />
      <path d="M11 11l4 4M27 11l-4 4M11 27l4-4M27 27l-4-4" stroke="#1c2440" strokeWidth="1.5" />
    </svg>
  );
}

function SliceIcon({ tint }: { tint: string }) {
  return (
    <svg className="shrink-0" width="38" height="38" viewBox="0 0 38 38">
      <path d="M19 0v4M19 34v4M0 19h4M34 19h4" stroke="#000" strokeWidth="2" />
      <rect x="6" y="6" width="26" height="26" fill="#000" opacity="0.6" />
      <path d="M8 10h12M8 14h12M8 18h10" stroke={tint} strokeWidth="3" strokeDasharray="3 1" />
      <path d="M8 22h10M8 26h11M8 30h12M21 10h9M21 14h9M27 22h4M27 27h4" stroke={tint} strokeWidth="2" strokeDasharray="2.5 1.5" opacity="0.4" />
      <rect x="19" y="19" width="8" height="9" fill="#000" opacity="0.7" />
    </svg>
  );
}

function ViewHeader({ label, bar, value, tint }: { label: string; bar: string; value?: string; tint?: string }) {
  return (
    <div className={`flex h-[62px] shrink-0 items-center pb-[1px] text-[26px] text-black ${bar}`}>
      <Pin />
      <span className="mt-[1px] w-[70px] text-center">{label}</span>
      {value ? <SliceIcon tint={tint!} /> : <CenterIcon />}
      <div className="w-[34px]" />
      <Maximize />
      {value && (
        <>
          <div className="relative ml-[33px] h-[10px] flex-1 rounded-[3px] border-2 border-black bg-[#d6d6d6]">
            <div className="h-full w-1/2 bg-[#5ea5f6]" />
            <div className="absolute left-1/2 top-1/2 h-[26px] w-[20px] -translate-x-1/2 -translate-y-1/2 rounded-[5px] border-2 border-black bg-white" />
          </div>
          <span className="mb-[1px] ml-[12px] mr-[28px] whitespace-nowrap tracking-[-0.24px]">{value}</span>
        </>
      )}
    </div>
  );
}

/* Deterministic speckle over the lit part of the surface. */
function buildSpecks() {
  let seed = 7;
  const rnd = () => ((seed = (seed * 16807) % 2147483647) / 2147483647);
  const zones: [number, number, number, number, number][] = [
    [255, 190, 52, 70, 330], [262, 340, 38, 60, 110], [285, 510, 50, 60, 190], [285, 610, 45, 70, 130],
    [270, 700, 55, 60, 170], [310, 810, 55, 70, 330],
  ];
  let d = '';
  zones.forEach(([cx, cy, rx, ry, n]) => {
    for (let i = 0; i < n; i++) {
      const a = rnd() * 6.283, r = Math.sqrt(rnd());
      const x = Math.round((cx + Math.cos(a) * r * rx) / 3) * 3;
      const y = Math.round((cy + Math.sin(a) * r * ry) / 3) * 3;
      const w = rnd() > 0.6 ? 9 : 4;
      d += `M${x} ${y}h${w}v3h-${w}z`;
    }
  });
  return d;
}
const SPECKS = buildSpecks();

const BODY =
  'M117 93L160 92 168 101 195 100 195 94 285 94 288 102 335 103 345 97 358 103 368 97 370 150 374 180 370 240 382 300 383 395 378 420 395 455 410 480 408 500 388 540 390 590 405 615 417 660 402 690 403 750 422 795 422 818 428 832 418 865 405 887 380 889 365 886 290 887 230 886 200 882 196 860 204 820 204 780 208 740 203 705 188 680 185 650 190 620 188 580 172 535 155 508 162 485 160 460 168 410 166 385 155 345 157 290 156 230 143 180 130 140Z';

function ThreeDScene({ id }: { id: string }) {
  return (
    <svg className="min-h-0 w-full flex-1 bg-gradient-to-b from-[#7577bd] to-[#c1c3e8]" viewBox="0 0 658 864" preserveAspectRatio="none">
      <defs>
        <clipPath id={`c${id}`}><path d={BODY} /></clipPath>
        <filter id={`b${id}`} x="-50%" y="-20%" width="200%" height="140%"><feGaussianBlur stdDeviation="11" /></filter>
      </defs>
      <g stroke="#ff00ff" fill="none" strokeWidth="1" shapeRendering="crispEdges">
        <path d="M0 28.5H658M60.5 163.5H597.5V700.5H60.5Z" />
        <path d="M0 103L60.5 163.5M658 103L597.5 163.5M60.5 700.5L0 761M597.5 700.5L658 761" />
      </g>
      <g fontFamily="Liberation Sans, Arial, sans-serif" fill="#fff" textAnchor="middle">
        <text x="329" y="79.500" fontSize="52">S</text>
        <text x="328.500" y="447" fontSize="41">P</text>
        <text x="329" y="821" fontSize="51">I</text>
      </g>
      <g transform="translate(270 564) scale(0.33333)">
        <path d={BODY} fill="#7fac7f" />
        <g clipPath={`url(#c${id})`}>
          <path d="M117 93L143 180 156 290 155 345 166 410 155 508 188 580 186 680 206 740 200 882" stroke="#0c140c" strokeWidth="34" fill="none" filter={`url(#b${id})`} opacity="0.8" />
          <path d="M368 97L370 240 382 300 383 395 383 430 410 490 388 540 390 590 416 660 402 690 405 750 430 832" stroke="#0c140c" strokeWidth="30" fill="none" filter={`url(#b${id})`} opacity="0.8" />
          <path d={SPECKS} fill="#9aa58f" opacity="0.9" />
          <path d="M150 150q12-30 22-48M348 118q15 25 18 60M122 110l30 6M128 130l22-8M345 120l22-12" stroke="#1c281c" strokeWidth="4" fill="none" opacity="0.7" />
          <path d="M315 505l15 20-2 20-10-20zM355 635l10 22-8 0zM350 760l18-25 2 20z" fill="#5a6a58" opacity="0.7" />
        </g>
        <path d={BODY} fill="none" stroke="#18251a" strokeWidth="3" strokeDasharray="9 5" opacity="0.8" />
        <path d="M322 722l10-7h20l6 12-8 12 4 10-12-4-16-4zM243 727l12 0-2 10zM246 750l14-12 16-4-10 14-14 6z" fill="#bcbee6" />
      </g>
      <path d="M0 835.5H658" stroke="#ff00ff" strokeWidth="1" shapeRendering="crispEdges" />
    </svg>
  );
}

function CoronalScene() {
  return (
    <svg className="min-h-0 w-full flex-1 bg-black" viewBox="0 0 656 864" preserveAspectRatio="none">
      <g transform="translate(290 584) scale(0.4847 0.33333)" shapeRendering="crispEdges">
        <path fill="#7fac7f" d="M44 130L54 126 56 150 66 175 88 172 100 150 96 115 102 100 88 80 88 66 100 66 158 66 160 78 170 78 162 90 162 140 180 168 207 168 215 155 214 136 205 133 216 130 216 112 227 112 227 172 220 180 218 205 205 245 200 275 190 285 188 325 182 345 165 357 150 365 126 363 118 345 108 343 108 325 100 325 99 265 90 262 78 230 68 205 60 190 58 165Z" />
        <path fill="#40563e" d="M104 80L112 72 112 133 125 133 143 125 145 72 156 72 157 142 178 176 208 176 212 168 212 205 200 235 188 258 188 280 172 288 170 320 138 322 132 338 124 318 112 315 112 285 105 262 98 255 85 215 75 205 66 180 90 176 105 150 104 120ZM124 342L165 340 150 355 128 355Z" />
      </g>
    </svg>
  );
}

function SagittalScene() {
  return (
    <svg className="min-h-0 w-full flex-1 bg-black" viewBox="0 0 658 864" preserveAspectRatio="none">
      <g transform="translate(-368 584) scale(0.4847 0.33333)" shapeRendering="crispEdges">
        <path fill="#7fac7f" d="M1339 55L1350 55 1352 66 1368 68 1368 58 1384 58 1384 85 1390 110 1402 124 1412 100 1424 63 1434 63 1430 90 1422 115 1424 145 1440 172 1456 180 1460 158 1475 155 1488 142 1484 136 1497 138 1490 158 1470 180 1450 215 1430 245 1426 330 1415 370 1398 392 1399 410 1385 430 1376 480 1362 508 1346 524 1340 524 1325 510 1314 498 1312 482 1325 450 1340 420 1344 390 1341 305 1350 290 1355 240 1360 210 1358 160 1350 110Z" />
        <path fill="#40563e" d="M1350 68L1372 76 1374 110 1390 150 1395 165 1404 165 1410 150 1418 138 1425 158 1440 180 1458 184 1445 210 1428 238 1422 330 1412 368 1396 388 1395 410 1380 430 1372 480 1358 506 1342 518 1330 508 1318 495 1317 483 1330 450 1344 425 1349 392 1346 310 1355 280 1360 240 1365 200 1362 150 1356 105Z" />
      </g>
    </svg>
  );
}

const BARS = {
  blue: 'bg-[linear-gradient(180deg,#8094ff_0%,#6f80e2_12%,#6774cb_22%,#7080de_45%,#788bf4_66%,#7b8ef8_84%,#6a7ad8_93%,#5b69bb_100%)]',
  red: 'bg-[linear-gradient(180deg,#ff5138_0%,#f24a34_10%,#d8422e_22%,#e94932_42%,#ff4e36_64%,#ff4f38_85%,#d8432f_95%,#be3a28_100%)]',
  green: 'bg-[linear-gradient(180deg,#9cf472_0%,#84cc5e_8%,#68a548_14%,#5f9a41_24%,#6cab4c_46%,#74b752_64%,#76b952_85%,#649d46_95%,#568a3c_100%)]',
  yellow: 'bg-[linear-gradient(180deg,#ffe455_0%,#ecd34e_10%,#cfbb44_23%,#e2cc4a_44%,#f9df50_66%,#f9df50_85%,#d2bc46_95%,#b8a33c_100%)]',
  redPlus: 'bg-[linear-gradient(180deg,#ffb0a4_0%,#f0a498_12%,#dd958b_23%,#eda096_44%,#ffaca0_64%,#ffaca1_85%,#dc948a_95%,#c2827a_100%)]',
  greenPlus: 'bg-[linear-gradient(180deg,#ddffd0_0%,#c2dcb4_12%,#adc6a0_23%,#bdd8b0_44%,#cfebc1_64%,#d0ecc2_85%,#b2cba6_95%,#9cb292_100%)]',
  yellowPlus: 'bg-[linear-gradient(180deg,#fff2b0_0%,#f0e09e_12%,#d8c88c_23%,#e8d898_44%,#feeca6_64%,#ffeda6_85%,#dccc90_95%,#c2b47e_100%)]',
};

function ViewRow({ plus, h }: { plus?: boolean; h: string }) {
  const p = plus ? '+' : '';
  return (
    <div className={`flex gap-[2px] ${h}`}>
      <div className="flex w-[658px] flex-col"><ViewHeader label={`1${p}`} bar={BARS.blue} /><ThreeDScene id={plus ? 'b' : 'a'} /></div>
      <div className="flex w-[658px] flex-col bg-black"><ViewHeader label={`R${p}`} bar={plus ? BARS.redPlus : BARS.red} value="S: 0.0000mm" tint={plus ? '#ffaca0' : '#ff7a60'} /></div>
      <div className="flex w-[656px] flex-col"><ViewHeader label={`G${p}`} bar={plus ? BARS.greenPlus : BARS.green} value="A: 0.0000mm" tint={plus ? '#cfebc1' : '#9adf74'} /><CoronalScene /></div>
      <div className="flex w-[658px] flex-col"><ViewHeader label={`Y${p}`} bar={plus ? BARS.yellowPlus : BARS.yellow} value="L: 0.0000mm" tint={plus ? '#feeca6' : '#fff08a'} /><SagittalScene /></div>
    </div>
  );
}

/* ---------- context menu ---------- */

function MenuItem({ label, active }: { label: string; active?: boolean }) {
  return (
    <div className={`flex h-[48px] items-center pl-[56px] text-[26px] tracking-[-0.18px] ${active ? 'border-y-2 border-[#6f94d4] bg-[#7da4ea] text-white' : 'text-[#262626]'}`}>
      {label}
    </div>
  );
}

function Separator() {
  return <div className="ml-[9px] mr-[11px] h-[4px] border-t border-[#bdbdbd]" />;
}

function ContextMenu() {
  return (
    <div className="absolute left-[252px] top-[658px] w-[572px] bg-white shadow-[inset_0_0_0_2px_#979797,0_16px_36px_rgba(0,0,0,0.25)]">
      <MenuItem label="Rename" />
      <MenuItem label="Clone" />
      <MenuItem label="Delete" />
      <MenuItem label="Edit properties..." />
      <Separator />
      <MenuItem label="Convert model to segmentation node" />
      <MenuItem label="Export to file..." active />
      <MenuItem label="Export to DICOM..." />
      <Separator />
      <MenuItem label="Create child folder" />
    </div>
  );
}

/* ---------- window ---------- */

export default function App() {
  return (
    <div className="h-[2158px] w-[3456px] overflow-hidden bg-gradient-to-b from-[#bdbba8] from-50% to-[#060a06] to-50%">
      <div className="relative flex h-[2158px] w-[3456px] flex-col overflow-hidden rounded-[20px] bg-[#ececec] font-['Inter','Liberation_Sans',sans-serif] tracking-[-0.2px]">
        <div className="relative flex h-[58px] shrink-0 items-center justify-center border-b border-[#d0d0d0] bg-[#f1f1ef]">
          <div className="absolute left-[16px] top-[16px] flex gap-[16px]">
            <div className="h-[24px] w-[24px] rounded-full border border-[#d95549] bg-[#ed6a5f]" />
            <div className="h-[24px] w-[24px] rounded-full border border-[#dba33c] bg-[#f5be4f]" />
            <div className="h-[24px] w-[24px] rounded-full border border-[#52ab43] bg-[#62c655]" />
          </div>
          <span className="pb-[4px] pr-[2px] text-[26px] font-bold tracking-[0.28px] text-[#464646]">3D Slicer 5.6.2</span>
        </div>
        <MainToolbar />
        <SequenceToolbar />
        <div className="flex h-[1855px] shrink-0">
          <LeftPanel />
          <div className="mt-[3px] flex h-[1852px] flex-col gap-[2px] bg-[#ececec]">
            <ViewRow h="h-[926px]" />
            <ViewRow h="h-[924px]" plus />
          </div>
        </div>
        <div className="flex flex-1 items-center justify-end pr-[5px]">
          <div className="mb-[1px] flex h-[60px] w-[60px] items-center justify-center rounded-[5px] border-2 border-[#b0b0b0] bg-gradient-to-b from-[#fdfdfd] to-[#ececec]">
            <svg width="46" height="46" viewBox="0 0 46 46">
              <circle cx="23" cy="23" r="21" fill="#f01414" stroke="#c80c0c" strokeWidth="1.5" />
              <path d="M15 15l16 16M31 15L15 31" stroke="#fff" strokeWidth="6" strokeLinecap="round" />
            </svg>
          </div>
        </div>
        <ContextMenu />
      </div>
    </div>
  );
}
